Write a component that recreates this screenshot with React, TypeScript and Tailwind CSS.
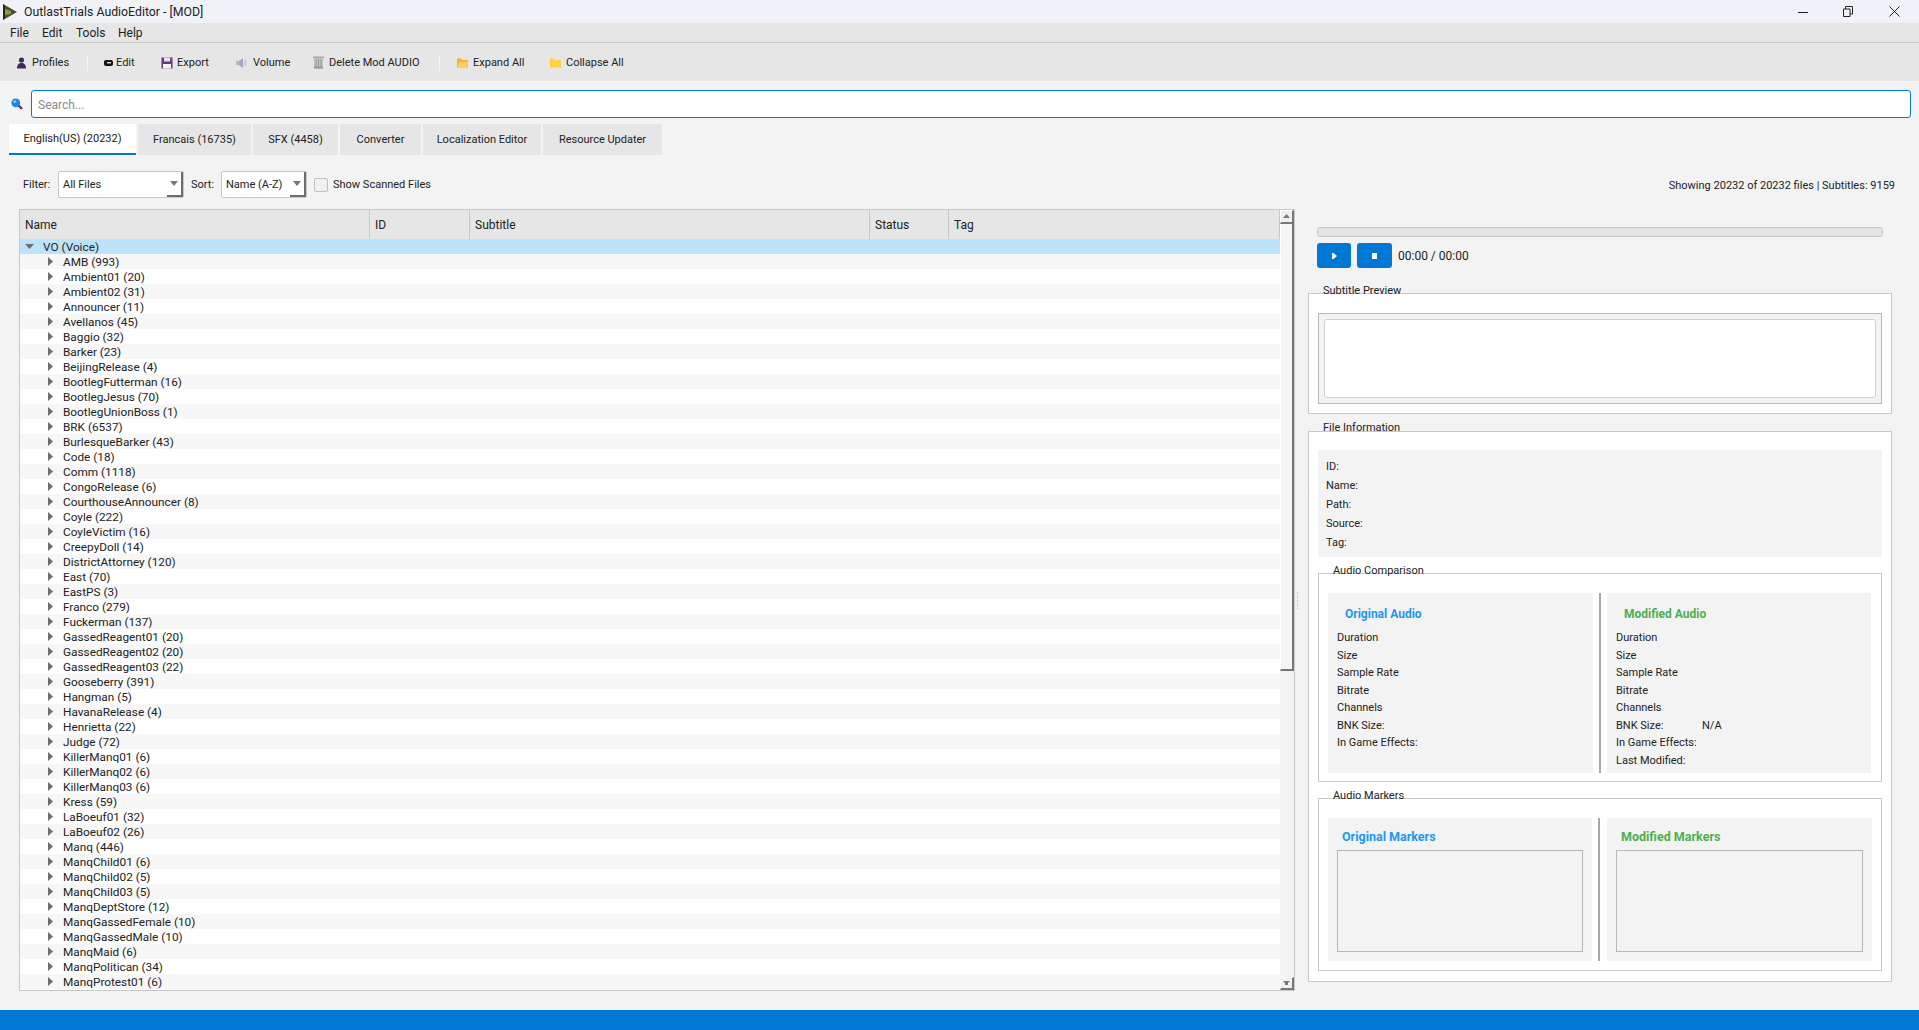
import type { ReactNode } from 'react'

const voices = [
  'AMB (993)', 'Ambient01 (20)', 'Ambient02 (31)', 'Announcer (11)', 'Avellanos (45)', 'Baggio (32)', 'Barker (23)',
  'BeijingRelease (4)', 'BootlegFutterman (16)', 'BootlegJesus (70)', 'BootlegUnionBoss (1)', 'BRK (6537)',
  'BurlesqueBarker (43)', 'Code (18)', 'Comm (1118)', 'CongoRelease (6)', 'CourthouseAnnouncer (8)', 'Coyle (222)',
  'CoyleVictim (16)', 'CreepyDoll (14)', 'DistrictAttorney (120)', 'East (70)', 'EastPS (3)', 'Franco (279)',
  'Fuckerman (137)', 'GassedReagent01 (20)', 'GassedReagent02 (20)', 'GassedReagent03 (22)', 'Gooseberry (391)',
  'Hangman (5)', 'HavanaRelease (4)', 'Henrietta (22)', 'Judge (72)', 'KillerManq01 (6)', 'KillerManq02 (6)',
  'KillerManq03 (6)', 'Kress (59)', 'LaBoeuf01 (32)', 'LaBoeuf02 (26)', 'Manq (446)', 'ManqChild01 (6)',
  'ManqChild02 (5)', 'ManqChild03 (5)', 'ManqDeptStore (12)', 'ManqGassedFemale (10)', 'ManqGassedMale (10)',
  'ManqMaid (6)', 'ManqPolitican (34)', 'ManqProtest01 (6)',
]

const tabs = [
  { label: 'Francais (16735)', width: 'w-[113px]' },
  { label: 'SFX (4458)', width: 'w-[85px]' },
  { label: 'Converter', width: 'w-[81px]' },
  { label: 'Localization Editor', width: 'w-[118px]' },
  { label: 'Resource Updater', width: 'w-[119px]' },
]

const columns = [
  { label: 'Name', width: 'w-[350px]' },
  { label: 'ID', width: 'w-[100px]' },
  { label: 'Subtitle', width: 'w-[400px]' },
  { label: 'Status', width: 'w-[79px]' },
  { label: 'Tag', width: 'flex-1' },
]

const infoRows = ['ID:', 'Name:', 'Path:', 'Source:', 'Tag:']
const audioRows = ['Duration', 'Size', 'Sample Rate', 'Bitrate', 'Channels']

function LogoIcon() {
  return (
    <svg width="16" height="18" viewBox="0 0 16 18">
      <path d="M1 1 L15 9 L1 17 Z" fill="#4b5127" />
      <path d="M3 6 L9 8 L9 11 L3 12 Z" fill="#8d9a4a" />
      <path d="M1 1 L3 3 L3 15 L1 17 Z" fill="#24270f" />
    </svg>
  )
}

function PersonIcon() {
  return (
    <svg width="11" height="12" viewBox="0 0 11 12">
      <circle cx="5.5" cy="3" r="2.6" fill="#3f2a5a" />
      <path d="M1 11.5 C1 7.5 3 6 5.5 6 C8 6 10 7.5 10 11.5 Z" fill="#3f2a5a" />
    </svg>
  )
}

function PencilIcon() {
  return (
    <svg width="10" height="8" viewBox="0 0 10 8">
      <rect x="0" y="1" width="9" height="6" rx="2" fill="#111" />
      <rect x="3" y="3" width="4" height="1.5" fill="#ddd" />
    </svg>
  )
}

function SaveIcon() {
  return (
    <svg width="12" height="12" viewBox="0 0 12 12">
      <rect x="0.5" y="0.5" width="11" height="11" fill="#5a3d80" />
      <rect x="3" y="0.5" width="6" height="4" fill="#e7e0ee" />
      <rect x="2" y="7" width="8" height="4.5" fill="#f4f0f6" />
      <rect x="9" y="0.5" width="2" height="3" fill="#b5475a" />
    </svg>
  )
}

function VolumeIcon() {
  return (
    <svg width="11" height="10" viewBox="0 0 11 10">
      <rect x="0" y="3" width="3" height="4" fill="#b9b3cb" />
      <path d="M3 3 L7 0 L7 10 L3 7 Z" fill="#a9a2c2" />
      <rect x="8" y="2" width="2.5" height="6" fill="#cfcadd" />
    </svg>
  )
}

function TrashIcon() {
  return (
    <svg width="11" height="13" viewBox="0 0 11 13">
      <rect x="0" y="0.5" width="11" height="2" fill="#a8a8a8" />
      <rect x="1" y="2.5" width="9" height="10" fill="#c4c4c4" />
      <path d="M3 3 V12 M5.5 3 V12 M8 3 V12" stroke="#9a9a9a" strokeWidth="1" />
      <rect x="1" y="10.5" width="9" height="2" fill="#999" />
    </svg>
  )
}

function FolderIcon({ open }: { open?: boolean }) {
  return (
    <svg width="11" height="11" viewBox="0 0 11 11">
      <path d="M0 1.5 H4 L5 3 H11 V10.5 H0 Z" fill={open ? '#f5b52e' : '#ffd23f'} />
      {open && <path d="M2 5 H11 L9.5 10.5 H0.5 Z" fill="#ffd055" />}
    </svg>
  )
}

function SearchIcon() {
  return (
    <svg width="12" height="12" viewBox="0 0 12 12">
      <path d="M7 7 L11 11" stroke="#4b3a78" strokeWidth="2.4" />
      <circle cx="4.8" cy="4.8" r="4.4" fill="#1e88e5" />
      <circle cx="3.8" cy="3.6" r="1.4" fill="#8fd0fb" />
    </svg>
  )
}

function TreeArrow({ open }: { open?: boolean }) {
  return open ? (
    <svg width="9" height="5" viewBox="0 0 9 5">
      <path d="M0 0 H9 L4.5 5 Z" fill="#6e6e6e" />
    </svg>
  ) : (
    <svg width="5" height="9" viewBox="0 0 5 9">
      <path d="M0 0 L5 4.5 L0 9 Z" fill="#6e6e6e" />
    </svg>
  )
}

function ScrollArrow({ down }: { down?: boolean }) {
  return (
    <svg width="7" height="5" viewBox="0 0 7 5">
      <path d={down ? 'M0 0 H7 L5 2 V4 H2 V2 Z' : 'M3.5 0 L7 4 H0 Z'} fill="#777" />
    </svg>
  )
}

function ToolItem({ icon, label, width, slot }: { icon: ReactNode; label: string; width: string; slot: string }) {
  return (
    <div className={`flex items-center ${width}`}>
      <span className={`flex items-center ${slot}`}>{icon}</span>
      <span className="pt-[2px]">{label}</span>
    </div>
  )
}

function Combo({ label, width }: { label: string; width: string }) {
  return (
    <div className={`flex h-[27px] items-stretch rounded-[2px] border border-[#c8c8c8] bg-white ${width}`}>
      <span className="flex flex-1 items-center pl-[4px] pt-[2px]">{label}</span>
      <span className="flex w-[16px] items-center justify-center border-r-2 border-b-2 border-r-[#6e6e6e] border-b-[#6e6e6e]">
        <svg width="8" height="5" viewBox="0 0 8 5">
          <path d="M0 0 H8 L4 5 Z" fill="#777" />
        </svg>
      </span>
    </div>
  )
}

function GroupBox({ title, className, raised, children }: { title: string; className: string; raised?: boolean; children: ReactNode }) {
  return (
    <div className={`relative border border-[#c8c8c8] bg-white text-[11px] ${className}`}>
      <span
        className={`absolute left-[9px] h-[20px] px-[5px] leading-[20px] ${
          raised
            ? 'top-[-14px] bg-[linear-gradient(transparent_14px,white_14px)]'
            : 'top-[-13px] bg-[linear-gradient(transparent_13px,white_13px)]'
        }`}
      >
        {title}
      </span>
      {children}
    </div>
  )
}

function AudioPanel({ title, titleColor, width, modified }: { title: string; titleColor: string; width: string; modified?: boolean }) {
  return (
    <div className={`h-[180px] bg-[#f3f3f3] pl-[9px] pt-[12px] ${width}`}>
      <div className={`pl-[8px] text-[12px] font-bold leading-[18px] ${titleColor}`}>{title}</div>
      <div className="mt-[6px] leading-[17.5px]">
        {audioRows.map((row) => (
          <div key={row}>{row}</div>
        ))}
        <div className="flex">
          <span className="w-[86px]">BNK Size:</span>
          {modified && <span>N/A</span>}
        </div>
        <div>In Game Effects:</div>
        {modified && <div>Last Modified:</div>}
      </div>
    </div>
  )
}

function MarkerPanel({ title, titleColor, width }: { title: string; titleColor: string; width: string }) {
  return (
    <div className={`h-[143px] bg-[#f3f3f3] px-[9px] pt-[9px] ${width}`}>
      <div className={`pl-[5px] pt-[1px] text-[12.5px] font-bold leading-[17px] ${titleColor}`}>{title}</div>
      <div className="mt-[5px] h-[102px] border border-[#b9b9b9]" />
    </div>
  )
}

export default function App() {
  return (
    <div className="flex h-[1030px] w-[1919px] flex-col overflow-hidden bg-[#f3f3f3] font-['Roboto',sans-serif] text-[12px] text-[#222]">
      {/* Title bar */}
      <div className="flex h-[23px] items-center bg-[#f0f2f7]">
        <span className="ml-[2px] flex w-[22px]"><LogoIcon /></span>
        <span className="pt-[2px] text-[12.3px]">OutlastTrials AudioEditor - [MOD]</span>
        <div className="ml-auto flex items-center pr-[19px]">
          <svg width="10" height="10" viewBox="0 0 10 10" className="mr-[35px]">
            <path d="M0 5.5 H10" stroke="#222" />
          </svg>
          <svg width="10" height="11" viewBox="0 0 10 11" className="mr-[36px]">
            <path d="M0.5 3 H7 V10.5 H0.5 Z M2.5 3 V0.5 H9.5 V8 H7" stroke="#222" fill="none" />
          </svg>
          <svg width="11" height="11" viewBox="0 0 11 11">
            <path d="M0.5 0.5 L10.5 10.5 M10.5 0.5 L0.5 10.5" stroke="#222" />
          </svg>
        </div>
      </div>

      {/* Menu */}
      <div className="flex h-[20px] items-center border-b border-[#c8c8c8] bg-[#e6e6e6]">
        <span className="ml-[10px] w-[32px]">File</span>
        <span className="w-[34px]">Edit</span>
        <span className="w-[42px]">Tools</span>
        <span>Help</span>
      </div>

      {/* Toolbar */}
      <div className="flex h-[38px] items-center bg-[#e6e6e6] pl-[16px] pt-[1px] text-[11px]">
        <ToolItem icon={<PersonIcon />} label="Profiles" width="w-[71px]" slot="w-[16px]" />
        <div className="h-[16px] w-px bg-[#f7f7f7]" />
        <div className="ml-[16px] flex items-center">
          <ToolItem icon={<PencilIcon />} label="Edit" width="w-[57px]" slot="w-[12px]" />
          <ToolItem icon={<SaveIcon />} label="Export" width="w-[75px]" slot="w-[16px]" />
          <ToolItem icon={<VolumeIcon />} label="Volume" width="w-[77px]" slot="w-[17px]" />
          <ToolItem icon={<TrashIcon />} label="Delete Mod AUDIO" width="w-[126px]" slot="w-[16px]" />
        </div>
        <div className="h-[16px] w-px bg-[#f7f7f7]" />
        <div className="ml-[17px] flex items-center">
          <ToolItem icon={<FolderIcon open />} label="Expand All" width="w-[93px]" slot="w-[16px]" />
          <ToolItem icon={<FolderIcon />} label="Collapse All" width="w-[100px]" slot="w-[16px]" />
        </div>
      </div>

      {/* Search */}
      <div className="flex items-center pl-[11px] pt-[9px]">
        <span className="w-[20px]"><SearchIcon /></span>
        <input
          placeholder="Search..."
          className="h-[28px] w-[1880px] rounded-[3px] border border-[#0078d4] bg-white pl-[6px] pt-[2px] outline-none placeholder:text-[#8a8a8a]"
        />
      </div>

      {/* Tabs */}
      <div className="ml-[9px] mt-[6px] flex gap-[2px] text-[11px]">
        <div className="flex h-[31px] w-[127px] items-center justify-center border-b-2 border-[#0078d4] bg-white pt-[2px]">English(US) (20232)</div>
        {tabs.map((tab) => (
          <div key={tab.label} className={`flex h-[31px] items-center justify-center bg-[#e6e6e6] pt-[2px] ${tab.width}`}>
            {tab.label}
          </div>
        ))}
      </div>

      {/* Filter row */}
      <div className="flex h-[54px] items-center pl-[23px] pr-[24px] pt-[5px] text-[11px]">
        <span className="w-[35px] pt-[2px]">Filter:</span>
        <Combo label="All Files" width="w-[126px]" />
        <span className="ml-[7px] w-[30px] pt-[2px]">Sort:</span>
        <Combo label="Name (A-Z)" width="w-[86px]" />
        <span className="ml-[7px] h-[14px] w-[14px] rounded-[2px] border border-[#c0c0c0] bg-[#f0f0f0]" />
        <span className="ml-[5px] pt-[2px]">Show Scanned Files</span>
        <span className="ml-auto pt-[4px]">Showing 20232 of 20232 files | Subtitles: 9159</span>
      </div>

      {/* Main */}
      <div className="flex flex-1 pl-[19px]">
        <div className="flex h-[782px] w-[1276px] border border-[#c8c8c8]">
          <div className="w-[1260px] overflow-hidden bg-white">
            <div className="flex h-[29px] items-center bg-[#e6e6e6]">
              {columns.map((col) => (
                <div key={col.label} className={`flex h-full items-center border-r border-[#c8c8c8] pl-[5px] ${col.width}`}>
                  {col.label}
                </div>
              ))}
            </div>
            <div className="flex h-[15px] items-center bg-[#bde3fb] pl-[5px]">
              <span className="w-[18px]"><TreeArrow open /></span>
              <span className="pt-[2px] text-[11.8px] leading-[13px]">VO (Voice)</span>
            </div>
            {voices.map((name, i) => (
              <div key={name} className={`flex h-[15px] items-center pl-[28px] text-[11.8px] ${i % 2 === 0 ? 'bg-[#f7f7f7]' : 'bg-white'}`}>
                <span className="w-[15px]"><TreeArrow /></span>
                <span className="pt-[2px] leading-[13px]">{name}</span>
              </div>
            ))}
          </div>

          {/* Scrollbar */}
          <div className="flex w-[14px] flex-col bg-[#f3f3f3]">
            <div className="flex h-[14px] items-center justify-center border-t border-l border-r-2 border-b-2 border-t-white border-l-white border-r-[#777] border-b-[#777] bg-[#f0f0f0]">
              <ScrollArrow />
            </div>
            <div className="h-[447px] border-l border-r-2 border-b-2 border-l-white border-r-[#777] border-b-[#777] bg-[#f5f5f5]" />
            <div className="flex-1" />
            <div className="flex h-[13px] items-center justify-center border-t border-l border-r-2 border-b-2 border-t-white border-l-white border-r-[#777] border-b-[#777] bg-[#f0f0f0]">
              <ScrollArrow down />
            </div>
          </div>
        </div>

        {/* Splitter */}
        <div className="flex h-[782px] w-[13px] items-center pl-[2px]">
          <div className="h-[17px] border-l border-dotted border-[#bbb]" />
        </div>

        {/* Right column */}
        <div className="w-[584px] pt-[18px]">
          <div className="ml-[9px] h-[10px] w-[566px] rounded-[3px] border border-[#c8c8c8] bg-[#e6e6e6]" />
          <div className="ml-[9px] mt-[6px] flex items-center">
            <div className="flex h-[25px] w-[34px] items-center justify-center rounded-[3px] bg-[#0078d4]">
              <svg width="5" height="6" viewBox="0 0 5 6">
                <path d="M0 0 H1.5 L5 3 L1.5 6 H0 Z" fill="white" />
              </svg>
            </div>
            <div className="ml-[6px] flex h-[25px] w-[35px] items-center justify-center rounded-[3px] bg-[#0078d4]">
              <span className="h-[6px] w-[5px] bg-white" />
            </div>
            <span className="ml-[6px]">00:00 / 00:00</span>
          </div>

          <GroupBox title="Subtitle Preview" className="mt-[25px] h-[121px] px-[9px] pt-[19px]">
            <div className="h-[91px] border border-[#b9b9b9] bg-[#f3f3f3] p-[5px]">
              <div className="h-full rounded-[3px] border border-[#cfcfcf] bg-white" />
            </div>
          </GroupBox>

          <GroupBox title="File Information" raised className="mt-[17px] h-[551px] px-[9px] pt-[18px]">
            <div className="h-[107px] bg-[#f3f3f3] pl-[8px] pt-[7px] leading-[19px]">
              {infoRows.map((row) => (
                <div key={row}>{row}</div>
              ))}
            </div>

            <GroupBox title="Audio Comparison" className="mt-[16px] h-[209px] px-[9px] pt-[19px]">
              <div className="flex">
                <AudioPanel title="Original Audio" titleColor="text-[#2196f3]" width="w-[265px]" />
                <div className="mx-[6px] w-[2px] bg-[#a8a8a8]" />
                <AudioPanel title="Modified Audio" titleColor="text-[#4caf50]" width="w-[264px]" modified />
              </div>
            </GroupBox>

            <GroupBox title="Audio Markers" className="mt-[16px] h-[173px] px-[9px] pt-[19px]">
              <div className="flex">
                <MarkerPanel title="Original Markers" titleColor="text-[#2196f3]" width="w-[264px]" />
                <div className="ml-[6px] mr-[7px] w-[2px] bg-[#a8a8a8]" />
                <MarkerPanel title="Modified Markers" titleColor="text-[#4caf50]" width="w-[265px]" />
              </div>
            </GroupBox>
          </GroupBox>
        </div>
      </div>

      {/* Status bar */}
      <div className="h-[20px] bg-[#0078d4]" />
    </div>
  )
}
